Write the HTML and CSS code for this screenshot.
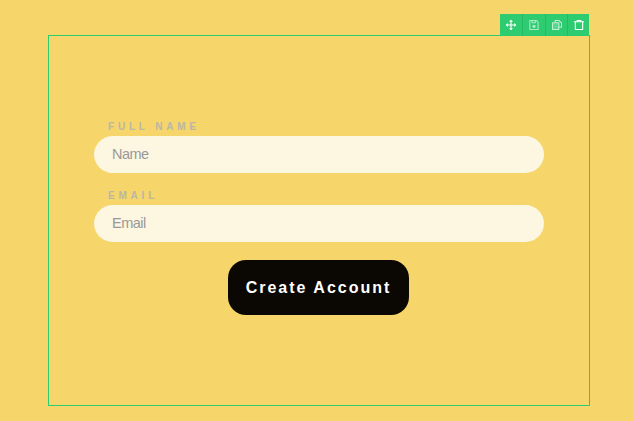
FILE: index.html
```html
<!DOCTYPE html>
<html lang="en">
<head>
    <meta charset="UTF-8">
    <title>Create Account</title>
    <link rel="stylesheet" href="styles.css">
</head>
<body>
    <div class="frame">
        <div class="toolbar">
            <button type="button" class="tool" title="Move">
                <svg width="10" height="10" viewBox="0 0 11 11" fill="none" stroke="#fff" stroke-width="1.200">
                    <path d="M5.500 0.500v10M0.500 5.500h10"/>
                    <path d="M4 2l1.500-1.500L7 2M4 9l1.500 1.500L7 9M2 4L0.500 5.500 2 7M9 4l1.500 1.500L9 7"/>
                </svg>
            </button>
            <button type="button" class="tool" title="Save">
                <svg width="10" height="10" viewBox="0 0 11 11" fill="none" stroke="#fff" stroke-width="1.200" opacity="0.6">
                    <path d="M1 0.500h7l2 2v8H1z"/>
                    <path d="M3.500 0.500v2.500h3.500v-2.500"/>
                    <circle cx="5.500" cy="7" r="1.300" fill="#fff"/>
                </svg>
            </button>
            <button type="button" class="tool" title="Copy">
                <svg width="10" height="10" viewBox="0 0 11 11" fill="none" stroke="#fff" stroke-width="1.200" opacity="0.7">
                    <path d="M3.500 2.500v-2h4l3 3v4.500h-3"/>
                    <path d="M0.500 3h7v7.500h-7z" fill="#fff" fill-opacity="0.300"/>
                </svg>
            </button>
            <button type="button" class="tool" title="Delete">
                <svg width="10" height="10" viewBox="0 0 11 11" fill="none" stroke="#fff" stroke-width="1.200">
                    <path d="M0 2h11M3.500 2V0.500h4V2"/>
                    <path d="M1.500 2v8.500h8V2"/>
                </svg>
            </button>
        </div>
        <form class="signup">
            <div class="field">
                <label for="name">Full Name</label>
                <input type="text" id="name" placeholder="Name">
            </div>
            <div class="field">
                <label for="email">Email</label>
                <input type="text" id="email" placeholder="Email">
            </div>
            <button type="button" class="submit">Create Account</button>
        </form>
    </div>
</body>
</html>
```
FILE: styles.css
```css
html, body {
    height: 100%;
}
body {
    margin: 0;
    padding: 35px 0 0 48px;
    box-sizing: border-box;
    background-color: #f6d56b;
    font-family: "Liberation Sans", Arial, sans-serif;
    overflow: hidden;
}
.frame {
    position: relative;
    width: 542px;
    height: 371px;
    box-sizing: border-box;
    border: 1px solid #2ecc71;
    padding: 85px 45px 0;
}
.toolbar {
    position: absolute;
    top: -22px;
    right: 0;
    display: flex;
    height: 22px;
    background: #2ecc71;
}
.tool {
    width: 22px;
    height: 22px;
    padding: 0;
    border: none;
    border-left: 1px solid #27b866;
    background: none;
    display: flex;
    align-items: center;
    justify-content: center;
}
.tool:first-child {
    border-left: none;
}
.tool:nth-child(2) {
    width: 23px;
}
.signup {
    display: flex;
    flex-direction: column;
    align-items: center;
}
.field {
    width: 100%;
    margin-bottom: 17px;
}
label {
    display: block;
    height: 15px;
    padding-left: 14px;
    font-size: 10px;
    line-height: 11px;
    font-weight: bold;
    letter-spacing: 3.800px;
    text-transform: uppercase;
    color: #b9b7a6;
}
input {
    display: block;
    width: 100%;
    height: 37px;
    box-sizing: border-box;
    padding: 0 18px 1px;
    border: none;
    border-radius: 19px;
    background: #fdf6e0;
    font-family: inherit;
    font-size: 14.500px;
    letter-spacing: -0.500px;
}
input::placeholder {
    color: #999;
    opacity: 1;
}
.submit {
    width: 181px;
    height: 55px;
    margin: 1px 1px 0 0;
    padding: 0;
    border: none;
    border-radius: 18px;
    background: #0b0803;
    color: #fff;
    font-family: inherit;
    font-size: 16px;
    font-weight: bold;
    letter-spacing: 2px;
}
```
